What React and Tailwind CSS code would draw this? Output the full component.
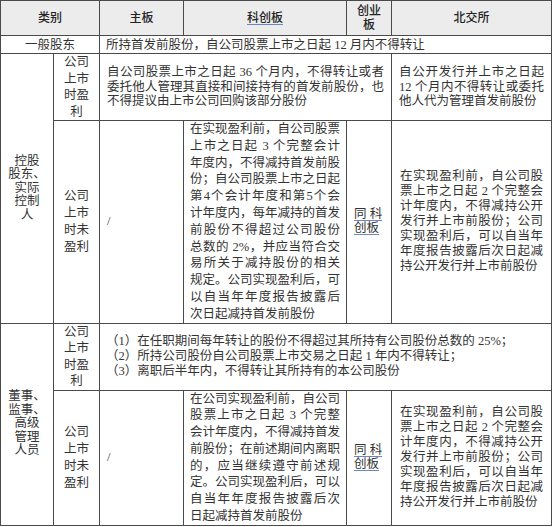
import React from 'react';

const font = { fontFamily: '"Liberation Serif", "Noto Sans CJK SC", serif' };

// one div per printed line; every line but the last is stretched to the cell width
const Just = ({ lines }) =>
  lines.map((t, i) => (
    <div
      key={i}
      className={i < lines.length - 1 ? 'whitespace-nowrap text-justify [text-align-last:justify]' : 'whitespace-nowrap'}
    >
      {t}
    </div>
  ));

const Stack = ({ lines }) => lines.map((t, i) => <div key={i}>{t}</div>);

const cell = 'border border-[#4a4a4a] align-middle p-0';

const App = () => {
  return (
    <div className="w-[554px] h-[527px] bg-white overflow-hidden text-[#333]" style={font}>
      <table className="table-fixed border-collapse w-[551px] text-[12.5px]">
        <colgroup>
          <col className="w-[53px]" />
          <col className="w-[46px]" />
          <col className="w-[84px]" />
          <col className="w-[163px]" />
          <col className="w-[45px]" />
          <col className="w-[160px]" />
        </colgroup>
        <tbody>
          {/* header */}
          <tr className="h-[35px] bg-[#ececec] text-[12px] font-medium text-[#222]">
            <td colSpan={2} className={`${cell} text-center`}>类别</td>
            <td className={`${cell} text-center`}>主板</td>
            <td className={`${cell} text-center`}>
              <span className="underline decoration-[#6b86c0] underline-offset-2">科创板</span>
            </td>
            <td className={`${cell} text-center leading-[14px]`}>
              <div>创业</div>
              <div>板</div>
            </td>
            <td className={`${cell} text-center`}>北交所</td>
          </tr>

          <tr className="h-[18px] leading-[16px]">
            <td colSpan={2} className={`${cell} text-center`}>一般股东</td>
            <td colSpan={4} className={`${cell} pl-[6px]`}>所持首发前股份，自公司股票上市之日起 12 月内不得转让</td>
          </tr>

          {/* 控股股东 */}
          <tr className="h-[67px]">
            <td rowSpan={2} className={`${cell} text-center leading-[13.5px]`}>
              <Stack lines={['控股', '股东、', '实际', '控制', '人']} />
            </td>
            <td className={`${cell} text-center leading-[16.5px]`}>
              <Stack lines={['公司', '上市', '时盈', '利']} />
            </td>
            <td colSpan={3} className={`${cell} px-[7px] leading-[14.5px]`}>
              <Just
                lines={[
                  '自公司股票上市之日起 36 个月内，不得转让或者',
                  '委托他人管理其直接和间接持有的首发前股份，也',
                  '不得提议由上市公司回购该部分股份',
                ]}
              />
            </td>
            <td className={`${cell} px-[7px] leading-[14.5px]`}>
              <Just lines={['自公开发行并上市之日起', '12 个月内不得转让或委托', '他人代为管理首发前股份']} />
            </td>
          </tr>
          <tr className="h-[202px]">
            <td className={`${cell} text-center leading-[17px]`}>
              <Stack lines={['公司', '上市', '时未', '盈利']} />
            </td>
            <td className={`${cell} pl-[7px]`}>/</td>
            <td className={`${cell} px-[6px] leading-[16.8px]`}>
              <Just
                lines={[
                  '在实现盈利前，自公司股票',
                  '上市之日起 3 个完整会计',
                  '年度内，不得减持首发前股',
                  '份；自公司股票上市之日起',
                  '第4个会计年度和第5个会',
                  '计年度内，每年减持的首发',
                  '前股份不得超过公司股份',
                  '总数的 2%，并应当符合交',
                  '易所关于减持股份的相关',
                  '规定。公司实现盈利后，可',
                  '以自当年年度报告披露后',
                  '次日起减持首发前股份',
                ]}
              />
            </td>
            <td className={`${cell} pl-[7px] leading-[13.5px]`}>
              <span className="underline decoration-[#6b86c0] underline-offset-2">同 科</span>
              <br />
              <span className="underline decoration-[#6b86c0] underline-offset-2">创板</span>
            </td>
            <td className={`${cell} px-[8px] leading-[15px]`}>
              <Just
                lines={[
                  '在实现盈利前，自公司股',
                  '票上市之日起 2 个完整会',
                  '计年度内，不得减持公开',
                  '发行并上市前股份；公司',
                  '实现盈利后，可以自当年',
                  '年度报告披露后次日起减',
                  '持公开发行并上市前股份',
                ]}
              />
            </td>
          </tr>

          {/* 董监高 */}
          <tr className="h-[67px]">
            <td rowSpan={2} className={`${cell} text-center leading-[13.5px]`}>
              <Stack lines={['董事、', '监事、', '高级', '管理', '人员']} />
            </td>
            <td className={`${cell} text-center leading-[16.5px]`}>
              <Stack lines={['公司', '上市', '时盈', '利']} />
            </td>
            <td colSpan={4} className={`${cell} pl-[6px] leading-[15px]`}>
              <div>（1）在任职期间每年转让的股份不得超过其所持有公司股份总数的 25%；</div>
              <div>（2）所持公司股份自公司股票上市交易之日起 1 年内不得转让；</div>
              <div>（3）离职后半年内，不得转让其所持有的本公司股份</div>
            </td>
          </tr>
          <tr className="h-[135px]">
            <td className={`${cell} text-center leading-[17px]`}>
              <Stack lines={['公司', '上市', '时未', '盈利']} />
            </td>
            <td className={`${cell} pl-[7px]`}>/</td>
            <td className={`${cell} px-[6px] leading-[16.7px]`}>
              <Just
                lines={[
                  '在公司实现盈利前，自公司',
                  '股票上市之日起 3 个完整',
                  '会计年度内，不得减持首发',
                  '前股份；在前述期间内离职',
                  '的，应当继续遵守前述规',
                  '定。公司实现盈利后，可以',
                  '自当年年度报告披露后次',
                  '日起减持首发前股份',
                ]}
              />
            </td>
            <td className={`${cell} pl-[7px] leading-[13.5px]`}>
              <span className="underline decoration-[#6b86c0] underline-offset-2">同 科</span>
              <br />
              <span className="underline decoration-[#6b86c0] underline-offset-2">创板</span>
            </td>
            <td className={`${cell} px-[8px] leading-[15px]`}>
              <Just
                lines={[
                  '在实现盈利前，自公司股',
                  '票上市之日起 2 个完整会',
                  '计年度内，不得减持公开',
                  '发行并上市前股份；公司',
                  '实现盈利后，可以自当年',
                  '年度报告披露后次日起减',
                  '持公开发行并上市前股份',
                ]}
              />
            </td>
          </tr>
        </tbody>
      </table>
    </div>
  );
};

export default App;
